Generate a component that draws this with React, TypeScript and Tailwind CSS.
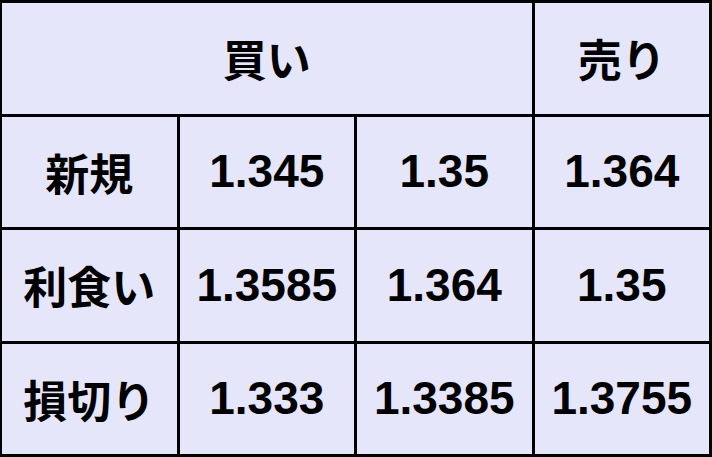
import { Fragment } from "react";

const rows = [
  { label: "新規", values: ["1.345", "1.35", "1.364"] },
  { label: "利食い", values: ["1.3585", "1.364", "1.35"] },
  { label: "損切り", values: ["1.333", "1.3385", "1.3755"] },
];

const jp = "font-['Noto_Sans_CJK_JP',sans-serif] font-bold text-[44px]";
const num = "font-['Liberation_Sans',Arial,sans-serif] font-bold text-[46px]";

export default function App() {
  return (
    <div className="w-[712px] h-[457px] bg-black p-[3px] pl-[2px] grid grid-cols-4 grid-rows-4 gap-[3px] text-black">
      <div className={`col-span-3 bg-[#e6e6fa] flex items-center justify-center ${jp}`}>
        買い
      </div>
      <div className={`bg-[#e6e6fa] flex items-center justify-center ${jp}`}>売り</div>
      {rows.map((r) => (
        <Fragment key={r.label}>
          <div className={`bg-[#e6e6fa] flex items-center justify-center ${jp}`}>
            {r.label}
          </div>
          {r.values.map((v, i) => (
            <div key={i} className={`bg-[#e6e6fa] flex items-center justify-center ${num}`}>
              {v}
            </div>
          ))}
        </Fragment>
      ))}
    </div>
  );
}
